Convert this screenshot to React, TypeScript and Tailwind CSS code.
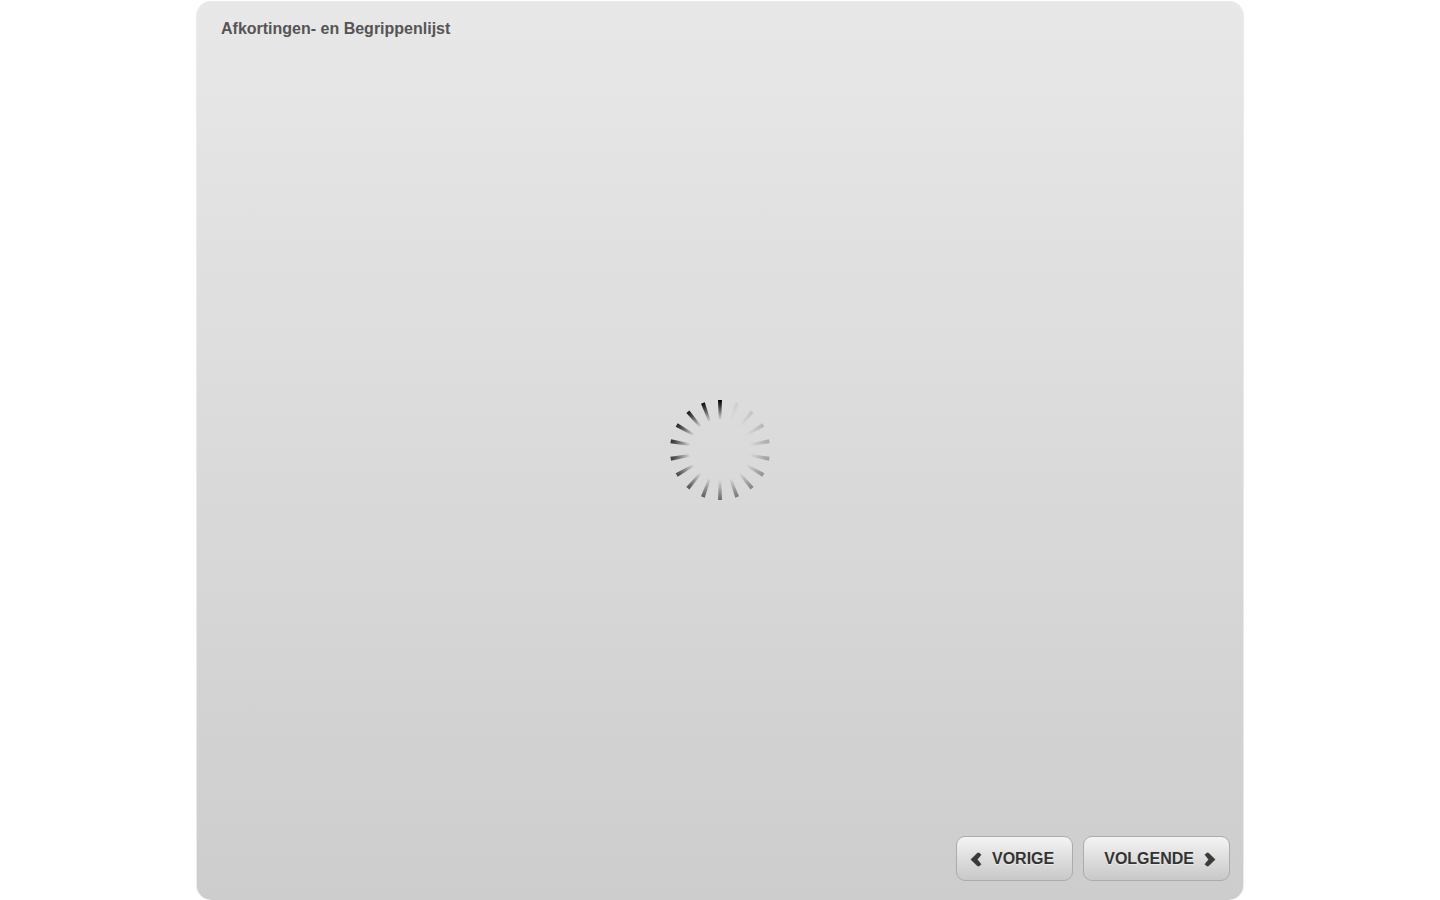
const SPOKES = 18;

function Spinner() {
  return (
    <svg viewBox="-50 -50 100 100" className="size-[100px]" role="img" aria-label="Laden">
      <defs>
        <linearGradient id="spoke" gradientUnits="userSpaceOnUse" x1="0" y1="-50" x2="0" y2="-30">
          <stop offset="0" stopColor="#000" />
          <stop offset="0.25" stopColor="#000" stopOpacity="0.8" />
          <stop offset="1" stopColor="#000" stopOpacity="0" />
        </linearGradient>
      </defs>
      {Array.from({ length: SPOKES }, (_, i) => (
        <path
          key={i}
          d="M-2-50H2L1.2-30H-1.2Z"
          fill="url(#spoke)"
          opacity={i === 0 ? 1 : i / SPOKES}
          transform={`rotate(${(i * 360) / SPOKES})`}
        />
      ))}
    </svg>
  );
}

function Chevron({ flip = false }: { flip?: boolean }) {
  return (
    <svg viewBox="0 0 12 16" className="mt-0.5 h-4 w-3" aria-hidden="true">
      <g transform={flip ? "translate(12 0) scale(-1 1)" : undefined}>
        <path d="M.8 7.5 7.2 1.2Q8.4.4 9.6 1.2L11.2 2.8 7.4 7.5 11.2 12.2 9.6 13.8Q8.4 14.6 7.2 13.8Z" fill="#3a3a3a" stroke="#3a3a3a" strokeOpacity="0.35" strokeWidth="1" strokeLinejoin="round" />
      </g>
    </svg>
  );
}

const buttonClass =
  "flex h-[45px] items-center gap-2.5 rounded-[9px] border border-[#acacac] bg-linear-to-b from-[#f4f4f4] to-[#c8c8c8] text-base font-bold text-[#333] [text-shadow:0_1px_0_#ffffff80]";

export default function App() {
  return (
    <div className="flex min-h-screen justify-center bg-white pt-px font-['Liberation_Sans',Arial,sans-serif]">
      <main className="flex w-full max-w-[1048px] flex-col rounded-[15px] border border-b-0 border-[#eaeaea] bg-linear-to-b from-[#e8e8e8] to-[#cdcdcd]">
        <header className="h-[62px] px-6 pt-[15px]">
          <h1 className="text-base font-bold text-[#555]">Afkortingen- en Begrippenlijst</h1>
        </header>
        <section className="flex flex-1 items-center justify-center" aria-busy="true">
          <Spinner />
        </section>
        <footer className="flex h-16 items-start justify-end gap-2.5 px-[13px]">
          <button type="button" className={`${buttonClass} pr-[18px] pl-[13px]`}>
            <Chevron />
            VORIGE
          </button>
          <button type="button" className={`${buttonClass} pr-[13px] pl-5`}>
            VOLGENDE
            <Chevron flip />
          </button>
        </footer>
      </main>
    </div>
  );
}
